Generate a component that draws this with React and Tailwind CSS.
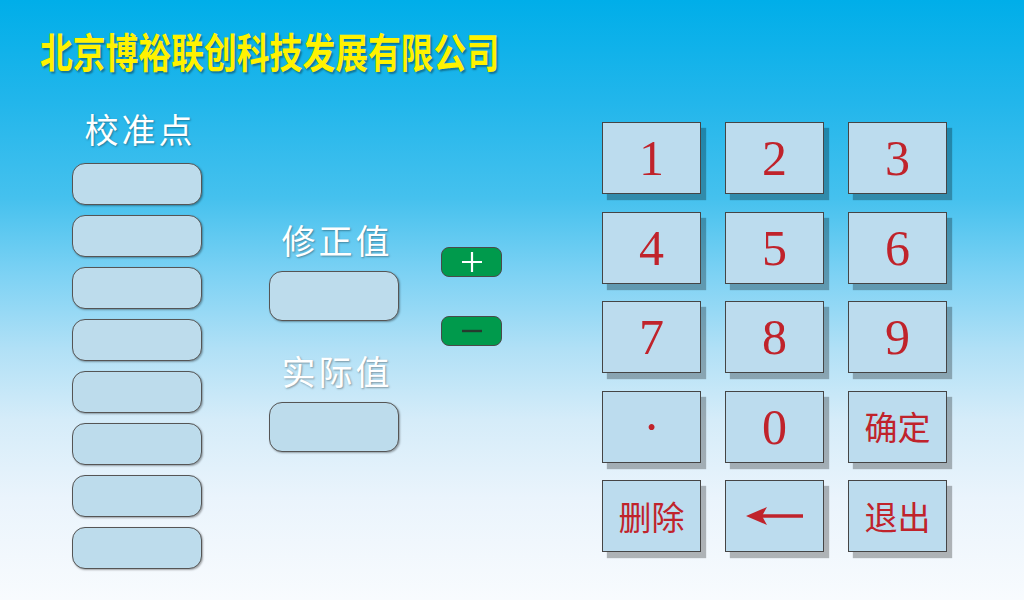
import React from 'react';

const keys = ['1', '2', '3', '4', '5', '6', '7', '8', '9', '·', '0', '确定', '删除', 'back', '退出'];

const Pill = ({ tall }) => (
  <div
    className={`w-[130px] ${tall ? 'h-[50px]' : 'h-[42px]'} rounded-[13px] border-[1.5px] border-[#555] bg-[#bddcec] shadow-[1px_1px_2px_rgba(0,0,0,0.35)]`}
  />
);

const Label = ({ children, className = '' }) => (
  <div
    className={`h-[40px] pl-[6px] text-center text-[34px] leading-[40px] tracking-[3px] text-white [text-shadow:1px_1px_2px_rgba(0,0,0,0.35)] ${className}`}
  >
    {children}
  </div>
);

const BackArrow = () => (
  <svg width="58" height="20" viewBox="0 0 58 20">
    <path d="M14 8.2 H57 V11.8 H14 Z" fill="#c0232b" />
    <path d="M0 10 L21 1 L16 10 L21 19 Z" fill="#c0232b" />
  </svg>
);

const Key = ({ k }) => {
  const isWord = k.length === 2;
  return (
    <button className="flex h-[72px] w-[99px] items-center justify-center border border-[#454545] bg-[#bcdcee] text-[#c0232b] shadow-[5px_6px_1px_rgba(0,0,0,0.28)]">
      {k === 'back' ? (
        <BackArrow />
      ) : isWord ? (
        <span className="font-['Noto_Sans_CJK_SC',sans-serif] text-[33px] leading-none">{k}</span>
      ) : (
        <span className="font-['Liberation_Serif',serif] text-[50px] leading-none">{k}</span>
      )}
    </button>
  );
};

export default function App() {
  return (
    <div className="h-[600px] w-[1024px] overflow-hidden bg-[linear-gradient(180deg,#00aee9_0%,#22b6eb_17%,#45c1ee_33%,#7ed2f4_46%,#b0e0f6_58%,#d5ecf9_70%,#eaf4fc_83%,#f8fbfe_100%)] font-['Noto_Sans_CJK_SC',sans-serif]">
      {/* Title */}
      <div className="h-[100px] pl-[40px] pt-[30px]">
        <div className="inline-block origin-left scale-x-[0.8] whitespace-nowrap text-[41px] font-bold leading-[41px] text-[#fff200] [text-shadow:2px_2px_2px_rgba(0,0,0,0.35)]">
          北京博裕联创科技发展有限公司
        </div>
      </div>

      <div className="flex items-start">
        {/* 校准点 */}
        <div className="ml-[72px] flex w-[130px] flex-col">
          <Label className="mt-[9px]">校准点</Label>
          <div className="mt-[14px] flex flex-col gap-[10px]">
            {Array.from({ length: 8 }).map((_, i) => (
              <Pill key={i} />
            ))}
          </div>
        </div>

        {/* 修正值 / 实际值 */}
        <div className="ml-[67px] flex w-[130px] flex-col">
          <Label className="mt-[120px]">修正值</Label>
          <div className="mt-[11px]">
            <Pill tall />
          </div>
          <Label className="mt-[30px]">实际值</Label>
          <div className="mt-[11px]">
            <Pill tall />
          </div>
        </div>

        {/* + / - */}
        <div className="ml-[42px] mt-[147px] flex flex-col gap-[39px]">
          <button className="flex h-[30px] w-[61px] items-center justify-center rounded-[8px] border border-[#4a4a4a] bg-[#009a4c]">
            <svg width="22" height="22" viewBox="0 0 22 22">
              <path d="M11 1 V21 M1 11 H21" stroke="#fff" strokeWidth="2.2" />
            </svg>
          </button>
          <button className="flex h-[30px] w-[61px] items-center justify-center rounded-[8px] border border-[#4a4a4a] bg-[#009a4c]">
            <svg width="20" height="6" viewBox="0 0 20 6">
              <path d="M0 3 H20" stroke="#263a2e" strokeWidth="2.4" />
            </svg>
          </button>
        </div>

        {/* Keypad */}
        <div className="ml-[100px] mt-[22px] grid grid-cols-[99px_99px_99px] gap-x-[24px] gap-y-[17.5px]">
          {keys.map((k) => (
            <Key key={k} k={k} />
          ))}
        </div>
      </div>
    </div>
  );
}
